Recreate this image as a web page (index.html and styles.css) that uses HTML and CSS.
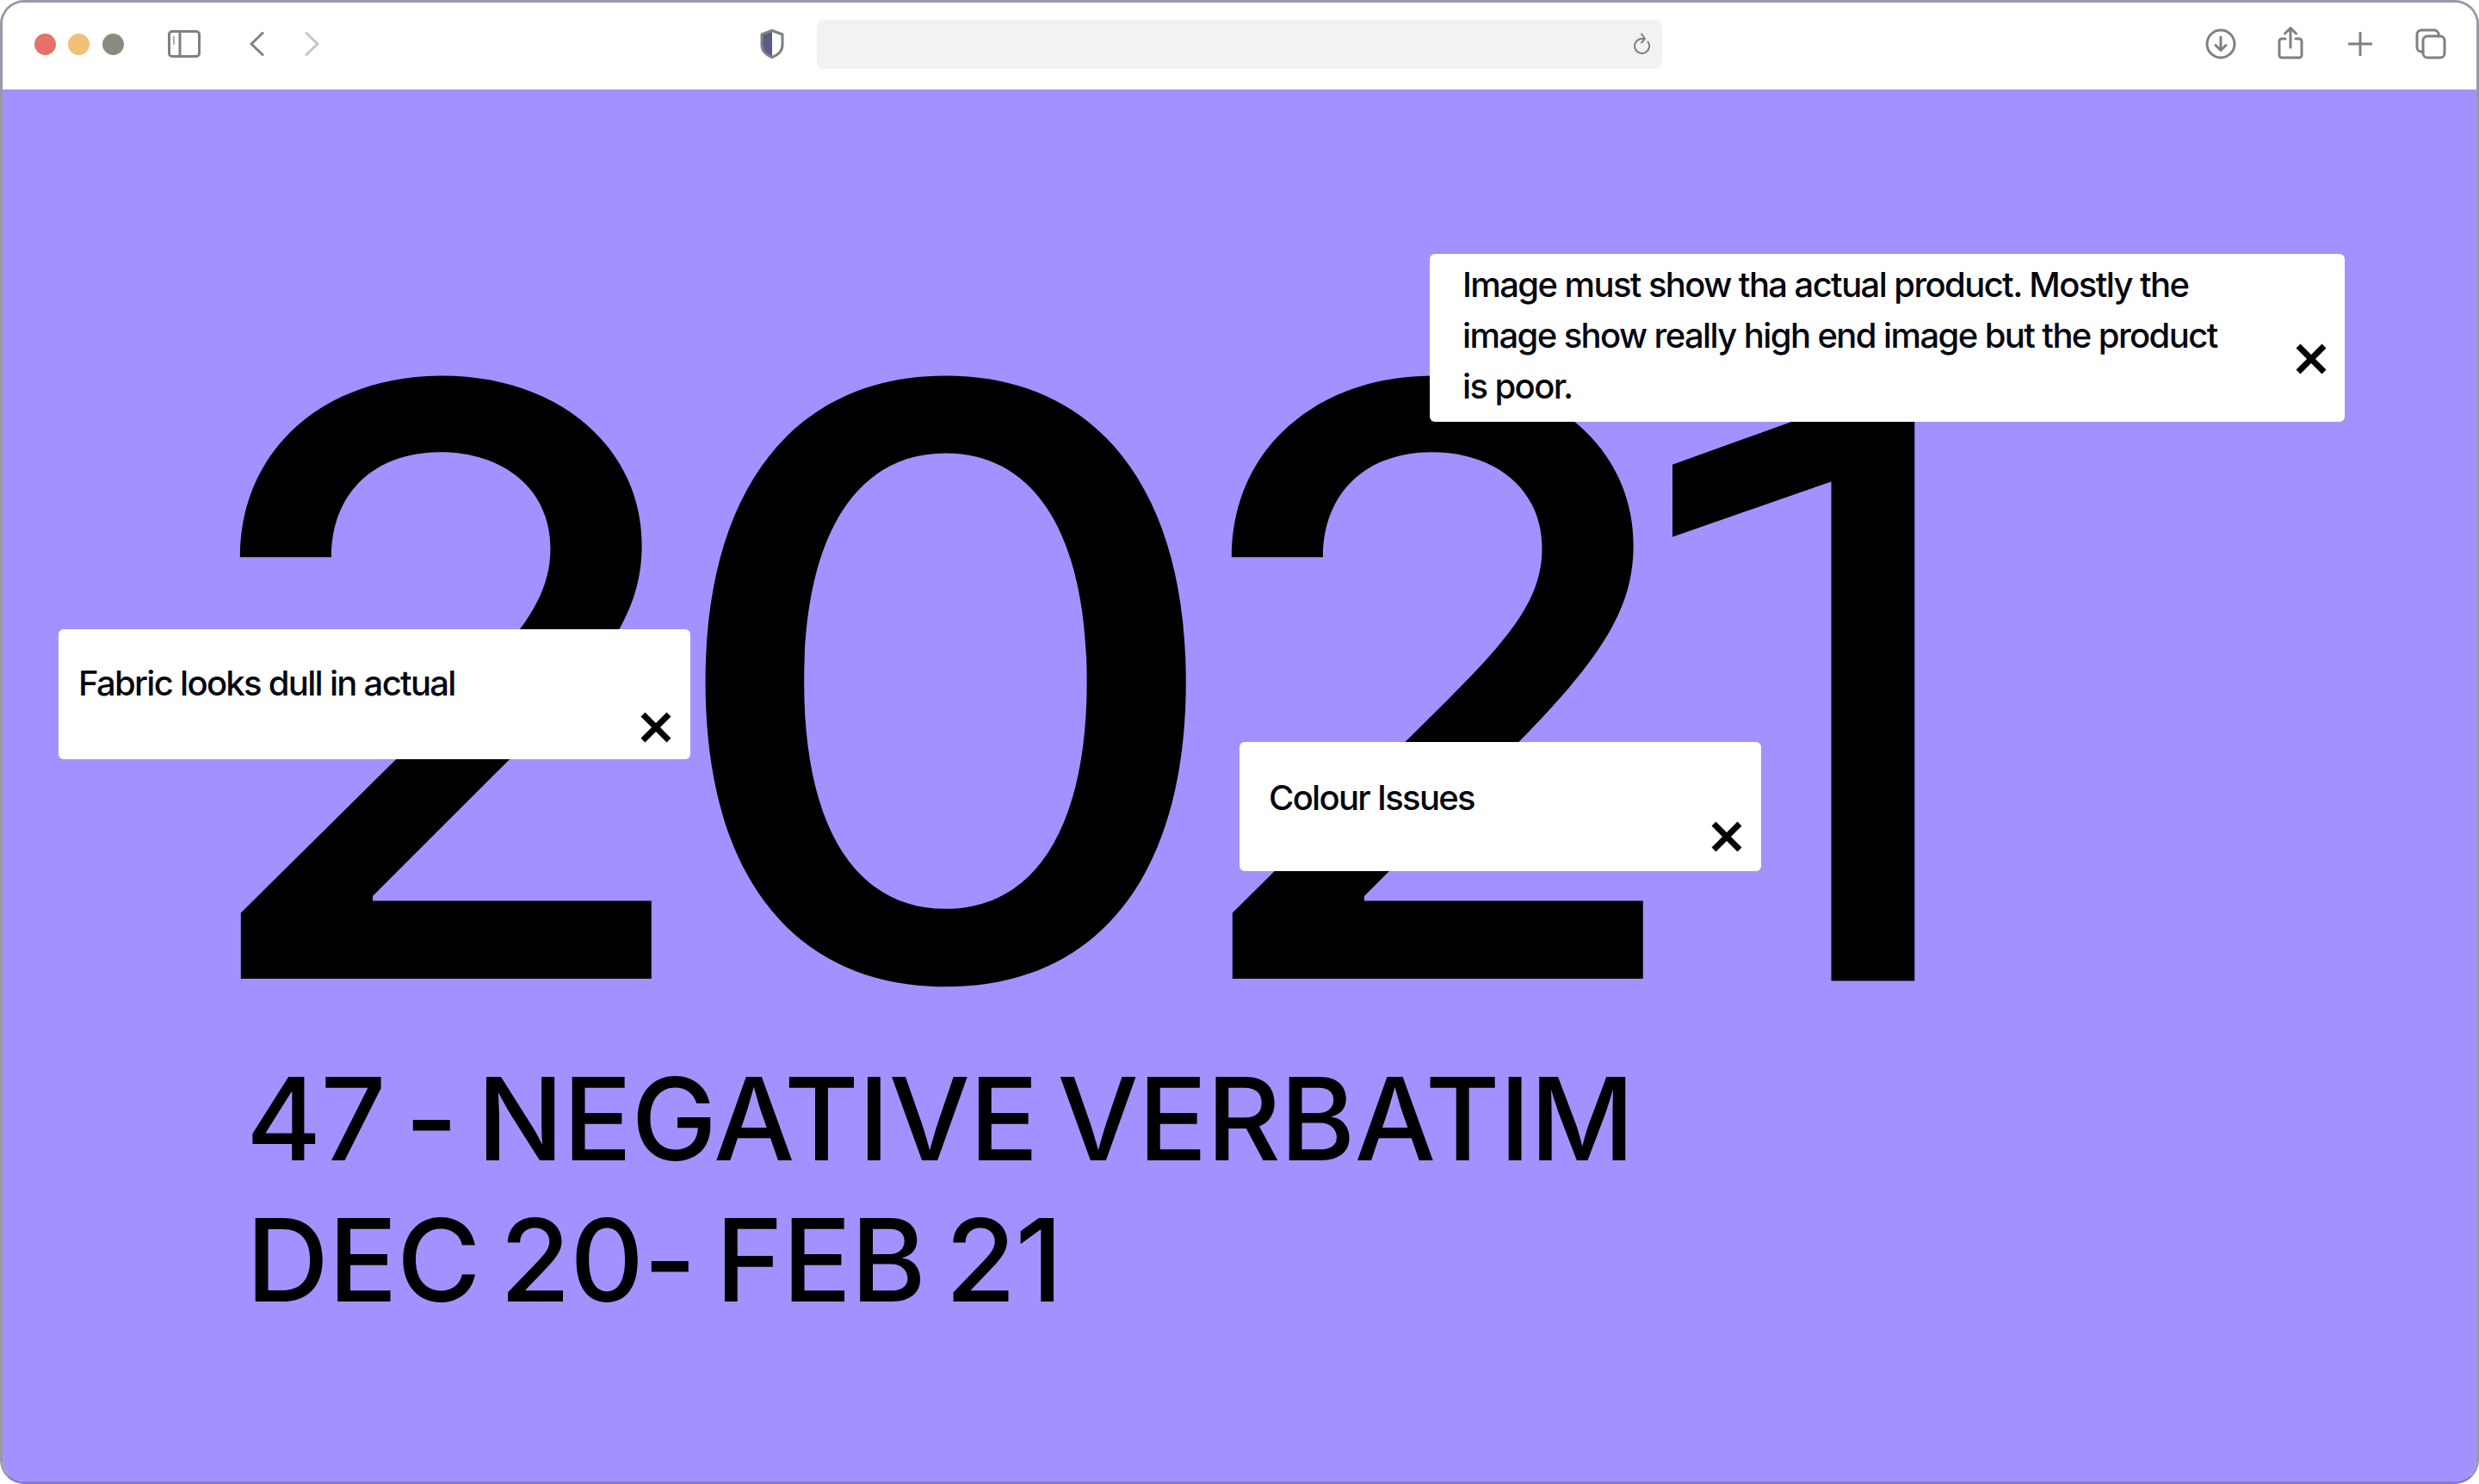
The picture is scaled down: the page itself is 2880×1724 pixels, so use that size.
FILE: index.html
```html
<!DOCTYPE html>
<html lang="en">
<head>
<meta charset="utf-8">
<title>2021 Negative Verbatim</title>
<link rel="stylesheet" href="styles.css">
</head>
<body>
<div class="window">
  <header class="toolbar">
    <span class="light light-red"></span>
    <span class="light light-yellow"></span>
    <span class="light light-gray"></span>
    <svg class="ic ic-sidebar" viewBox="0 0 38 32"><rect x="1.5" y="1.5" width="35" height="29" rx="3.5"/><path d="M14 1.5v29"/><path class="thin" d="M7 8v8"/></svg>
    <svg class="ic ic-back" viewBox="0 0 18 28"><path d="M16 1.5 3 14l13 12.5"/></svg>
    <svg class="ic ic-forward" viewBox="0 0 18 28"><path d="M2 1.5 15 14 2 26.5"/></svg>
    <svg class="ic ic-shield" viewBox="0 0 28 34"><path class="shield-fill" d="M14 1.5 2 6v12c0 7 5.500 12 12 14.500z"/><path d="M14 1.500 26 6v12c0 7-5.500 12-12 14.500C7.500 30 2 25 2 18V6z"/></svg>
    <div class="urlbar">
      <svg class="ic ic-reload" viewBox="0 0 22 28"><path d="M16.500 10.500a8.500 8.500 0 1 1-7.500-3.500h3"/><path d="M9 1.500 13 7l-4 4.500"/></svg>
    </div>
    <svg class="ic ic-download" viewBox="0 0 36 36"><circle cx="18" cy="18" r="16"/><path d="M18 10v15M12 19.500l6 6 6-6"/></svg>
    <svg class="ic ic-share" viewBox="0 0 30 38"><path d="M9 14H5a3 3 0 0 0-3 3v16a3 3 0 0 0 3 3h20a3 3 0 0 0 3-3V17a3 3 0 0 0-3-3h-4"/><path d="M15 24V2M8.500 8 15 1.500 21.500 8"/></svg>
    <svg class="ic ic-plus" viewBox="0 0 28 28"><path d="M14 1v26M1 14h26"/></svg>
    <svg class="ic ic-tabs" viewBox="0 0 36 36"><rect x="9" y="9" width="25" height="25" rx="5"/><path d="M9 27H7a5 5 0 0 1-5-5V7a5 5 0 0 1 5-5h15a5 5 0 0 1 5 5v2"/></svg>
  </header>

  <main class="stage">
    <div class="year"><span class="digit digit-two-a"><span class="glyph">2</span></span><span class="digit digit-zero"><span class="glyph">0</span></span><span class="digit digit-two-b"><span class="glyph">2</span></span><span class="digit digit-one"><span class="glyph">1</span></span></div>
    <h1 class="headline"><span class="line line-a">47 - NEGATIVE VERBATIM</span><span class="line line-b">DEC 20- FEB 21</span></h1>
  </main>

  <aside class="card card-image">
    <p class="card-text">Image must show tha actual product. Mostly the image show really high end image but the product is poor.</p>
    <svg class="close" viewBox="0 0 38 38"><path d="M4 4l30 30M34 4 4 34"/></svg>
  </aside>
  <aside class="card card-fabric">
    <p class="card-text">Fabric looks dull in actual</p>
    <svg class="close" viewBox="0 0 38 38"><path d="M4 4l30 30M34 4 4 34"/></svg>
  </aside>
  <aside class="card card-colour">
    <p class="card-text">Colour Issues</p>
    <svg class="close" viewBox="0 0 38 38"><path d="M4 4l30 30M34 4 4 34"/></svg>
  </aside>
</div>
</body>
</html>
```

FILE: styles.css
```css
* { box-sizing: border-box; }
html, body { margin: 0; padding: 0; background: #fff; }
body { font-family: Inter, "Liberation Sans", sans-serif; color: #000; }

.window {
  position: relative;
  width: 2880px;
  height: 1724px;
  border: 3px solid #9a98a6;
  border-bottom-color: #8578d0;
  border-radius: 28px;
  overflow: hidden;
  background: #fff;
  display: flex;
  flex-direction: column;
}

.toolbar {
  height: 101px;
  flex: none;
  display: flex;
  align-items: center;
  background: #fff;
  padding: 0 0 5px 37px;
}
.light { width: 25px; height: 25px; border-radius: 50%; flex: none; }
.light-red { background: #e8706a; }
.light-yellow { background: #f2c077; margin-left: 14px; }
.light-gray { background: #888c80; margin-left: 15px; }

.ic { flex: none; fill: none; stroke: #7e827c; stroke-width: 3; stroke-linecap: round; stroke-linejoin: round; }
.ic-sidebar { width: 38px; height: 32px; margin-left: 51px; }
.ic-sidebar .thin { stroke-width: 2; stroke: #a8aba6; }
.ic-back { width: 18px; height: 28px; margin-left: 56px; }
.ic-forward { width: 18px; height: 28px; margin-left: 47px; stroke: #c4c6c3; }
.ic-shield { width: 28px; height: 34px; margin-left: 511px; }
.shield-fill { fill: #5b5a8c; stroke: none; }

.urlbar {
  width: 982px;
  height: 57px;
  margin-left: 38px;
  background: #f2f2f2;
  border-radius: 8px;
  flex: none;
  display: flex;
  align-items: center;
  justify-content: flex-end;
  padding-right: 11px;
}
.ic-reload { width: 22px; height: 28px; stroke-width: 2; margin-top: 2px; }

.ic-download { width: 36px; height: 36px; margin-left: 631px; }
.ic-share { width: 30px; height: 38px; margin-left: 48px; margin-top: -2px; }
.ic-plus { width: 28px; height: 28px; margin-left: 52px; }
.ic-tabs { width: 36px; height: 36px; margin-left: 50px; }

.stage {
  flex: 1;
  background: #a391ff;
  padding-left: 207px;
  min-height: 0;
}

.year {
  display: flex;
  align-items: baseline;
  font-size: 950px;
  font-weight: 500;
  line-height: 1;
  height: 1114px;
  white-space: nowrap;
  padding-top: 213px;
}
.digit { flex: none; display: block; }
.glyph { display: inline-block; transform-origin: 0 50%; }
.digit-two-a { width: 552px; }
.digit-two-a .glyph, .digit-two-b .glyph { transform: scaleX(1.045); }
.digit-zero { width: 600px; }
.digit-zero .glyph { transform: scaleX(1.098); }
.digit-two-b { width: 499px; }
.digit-one { font-family: Roboto, sans-serif; font-size: 965px; font-weight: 400; -webkit-text-stroke: 5px #000; }
.digit-one .glyph { transform: scaleX(1.05); }

.headline {
  margin: 0;
  padding-left: 76px;
  font-size: 133px;
  font-weight: 500;
  line-height: 164px;
  white-space: nowrap;
}
.line { display: block; }
.line-a { letter-spacing: -0.7px; word-spacing: -12px; }
.line-b { letter-spacing: -0.6px; word-spacing: -12px; }

.card {
  position: absolute;
  display: flex;
  align-items: flex-end;
  background: #fff;
  border-radius: 6px;
  color: #06060f;
}
.card-text { margin: 0; flex: 1; font-size: 40px; line-height: 59px; font-weight: 500; letter-spacing: -1.7px; }
.close { flex: none; width: 38px; height: 38px; fill: none; stroke: #000; stroke-width: 7; }

.card-image { left: 1658px; top: 292px; width: 1063px; height: 195px; padding: 6px 20px 54px 38px; }
.card-image .card-text { align-self: flex-start; padding-right: 60px; letter-spacing: -1.6px; }
.card-fabric { left: 65px; top: 728px; width: 734px; height: 151px; padding: 0 21px 18px 23px; }
.card-fabric .card-text { align-self: flex-start; padding-top: 33px; }
.card-colour { left: 1437px; top: 859px; width: 606px; height: 150px; padding: 0 21px 21px 34px; }
.card-colour .card-text { align-self: flex-start; padding-top: 35px; }
```
